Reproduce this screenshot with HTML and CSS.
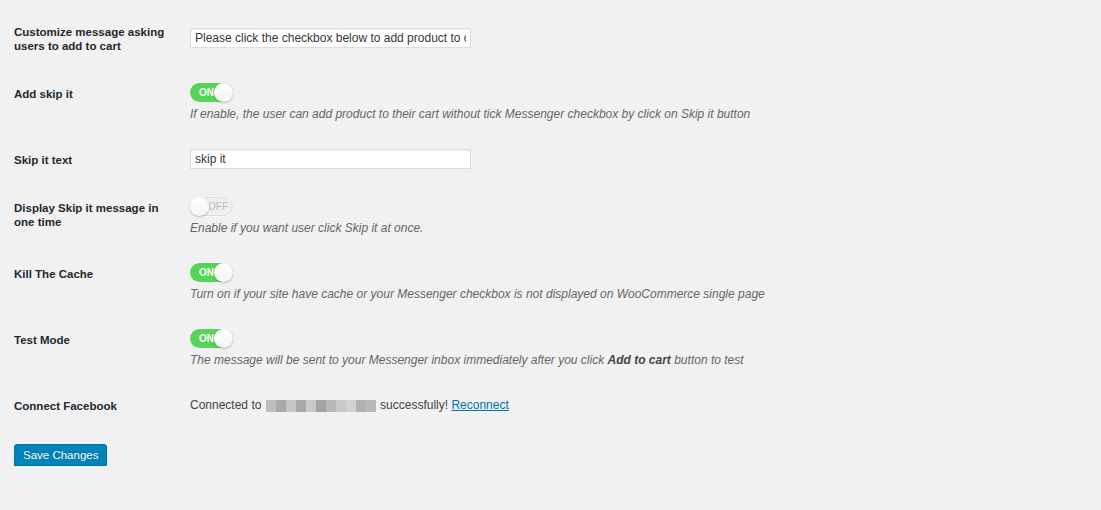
FILE: index.html
```html
<!DOCTYPE html>
<html lang="en"><head>
    <meta charset="UTF-8">
    <meta name="viewport" content="width=device-width, initial-scale=1.0">
    <title>Messenger Checkbox Settings</title>
    <link rel="stylesheet" href="styles.css">
</head>
<body>

<div class="wrap">
    <table class="form-table">
        <tr>
            <th>Customize message asking users to add to cart</th>
            <td><input type="text" class="regular-text" value="Please click the checkbox below to add product to cart"></td>
        </tr>
        <tr>
            <th>Add skip it</th>
            <td>
                <span class="toggle on"><span class="toggle-label">ON</span><span class="knob"></span></span>
                <p class="description">If enable, the user can add product to their cart without tick Messenger checkbox by click on Skip it button</p>
            </td>
        </tr>
        <tr>
            <th>Skip it text</th>
            <td><input type="text" class="regular-text" value="skip it"></td>
        </tr>
        <tr>
            <th>Display Skip it message in one time</th>
            <td>
                <span class="toggle off"><span class="toggle-label">OFF</span><span class="knob"></span></span>
                <p class="description">Enable if you want user click Skip it at once.</p>
            </td>
        </tr>
        <tr>
            <th>Kill The Cache</th>
            <td>
                <span class="toggle on"><span class="toggle-label">ON</span><span class="knob"></span></span>
                <p class="description">Turn on if your site have cache or your Messenger checkbox is not displayed on WooCommerce single page</p>
            </td>
        </tr>
        <tr>
            <th>Test Mode</th>
            <td>
                <span class="toggle on"><span class="toggle-label">ON</span><span class="knob"></span></span>
                <p class="description">The message will be sent to your Messenger inbox immediately after you click <b>Add to cart</b> button to test</p>
            </td>
        </tr>
        <tr>
            <th>Connect Facebook</th>
            <td class="connected">
                Connected to
                <span class="blurred"><i style="background:#bdbdbd"></i><i style="background:#a9a9a9"></i><i style="background:#c6c6c6"></i><i style="background:#a8a8a8"></i><i style="background:#cacaca"></i><i style="background:#a4a4a4"></i><i style="background:#b9b9b9"></i><i style="background:#c9c9c9"></i><i style="background:#d2d2d2"></i><i style="background:#b1b1b1"></i><i style="background:#b9b9b9"></i></span>
                successfully! <a href="#">Reconnect</a>
            </td>
        </tr>
    </table>
    <p class="submit"><button type="button" class="button-primary">Save Changes</button></p>
</div>

</body></html>
```

FILE: styles.css
```css
* {
    box-sizing: border-box;
}
body {
    margin: 0;
    background: #f1f1f1;
    color: #444;
    font-family: "Liberation Sans", Arial, sans-serif;
    font-size: 12px;
}

.wrap {
    padding: 8px 14px 0;
}

.form-table {
    border-collapse: collapse;
    border-spacing: 0;
    font-size: 12px;
}

.form-table th {
    width: 166px;
    padding: 17px 10px 17px 0;
    vertical-align: top;
    text-align: left;
    line-height: 14px;
    font-size: 11.5px;
    font-weight: bold;
    color: #23282d;
}

.form-table td {
    padding: 13px 10px 15px;
    vertical-align: middle;
    line-height: 14px;
}

.regular-text {
    display: block;
    width: 281px;
    height: 20px;
    margin: 0;
    padding: 0 4px;
    border: 1px solid #ddd;
    background: #fff;
    color: #32373c;
    font-family: inherit;
    font-size: 12px;
    box-shadow: inset 0 1px 2px rgba(0, 0, 0, 0.07);
    outline: none;
}

.toggle {
    position: relative;
    display: block;
    width: 43px;
    height: 19px;
    border-radius: 10px;
    box-shadow: 0 0 0 1px #f8f8f8, 0 0 2px 1px rgba(0, 0, 0, 0.04);
}
.toggle.on {
    background: #55d555;
}
.toggle.off {
    background: #efefef;
    border: 1px solid #dcdcdc;
}
.toggle-label {
    position: absolute;
    top: 0;
    font-size: 10px;
    line-height: 19px;
}
.toggle.on .toggle-label {
    left: 9px;
    color: #fff;
    font-weight: bold;
}
.toggle.off .toggle-label {
    left: 17px;
    line-height: 17px;
    color: #bbb;
}
.knob {
    position: absolute;
    top: 0;
    width: 19px;
    height: 19px;
    border-radius: 50%;
    background: linear-gradient(#fff, #f4f4f4);
    box-shadow: 0 1px 2px rgba(0, 0, 0, 0.25);
}
.toggle.on .knob {
    right: 0;
}
.toggle.off .knob {
    left: -1px;
    top: -1px;
}

.description {
    margin: 5px 0 0;
    font-style: italic;
    color: #666;
}
.description b {
    color: #444;
}

.connected {
    color: #444;
}
.blurred {
    display: inline-block;
    vertical-align: -2px;
    height: 12px;
    margin: 0 1px;
}
.blurred i {
    display: inline-block;
    width: 10px;
    height: 12px;
    vertical-align: top;
}
.connected a {
    color: #0073aa;
}

.submit {
    margin: 14px 0 0;
}
.button-primary {
    height: 22px;
    padding: 0 8px;
    border: 1px solid #0073aa;
    border-radius: 3px;
    background: #0085ba;
    color: #fff;
    font-family: inherit;
    font-size: 11.5px;
    box-shadow: 0 1px 0 #006799;
    text-shadow: 0 -1px 1px #006799;
    cursor: pointer;
}
```
